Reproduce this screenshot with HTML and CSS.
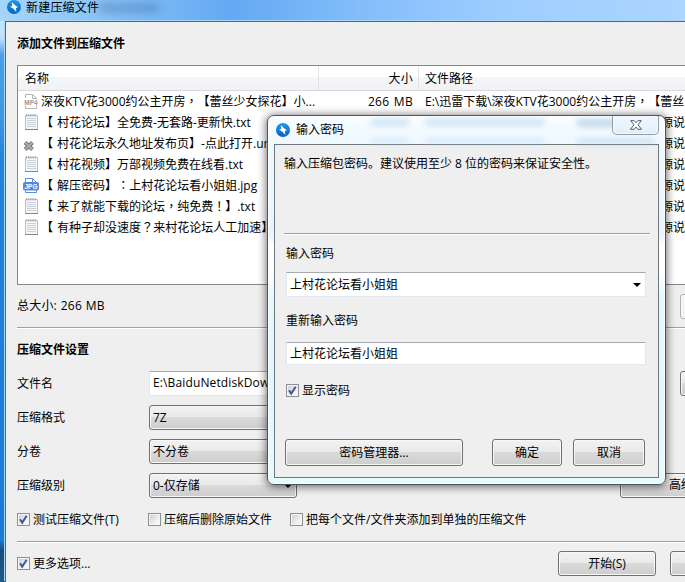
FILE: index.html
```html
<!DOCTYPE html>
<html lang="zh-CN">
<head>
<meta charset="utf-8">
<title>新建压缩文件</title>
<link rel="stylesheet" href="styles.css">
</head>
<body>
<svg class="defs" width="0" height="0">
  <defs>
    <linearGradient id="ball" x1="0" y1="0" x2="0" y2="1"><stop offset="0" stop-color="#1d96ea"/><stop offset="1" stop-color="#0765bd"/></linearGradient>
    <symbol id="app" viewBox="0 0 14 14"><circle cx="7" cy="7" r="7" fill="url(#ball)"/><path d="M4.800 2 8 5.200 11 7.300 8.900 8 9.400 12 6.200 8.600 3 6.700 5.300 6z" fill="#fff"/></symbol>
    <symbol id="txt" viewBox="0 0 14 17"><path d="M1.500 1.500h12v14h-12z" fill="#f4f6f7" stroke="#b9c0c3"/><path d="M2.500 0v2.500M4.700 0v2.500M6.900 0v2.500M9.100 0v2.500M11.300 0v2.500" stroke="#a6abae"/><path d="M3 4.500h9M3 6.500h9M3 8.500h9M3 10.500h9M3 12.500h9" stroke="#c6d3da"/><path d="M1 15.500h13" stroke="#7e8789"/></symbol>
    <symbol id="tick" viewBox="0 0 13 13"><path d="M3 6.300 5.200 9.600 9.700 2.800" fill="none" stroke="#41579c" stroke-width="2"/></symbol>
  </defs>
</svg>
<div class="titlebar"><svg class="app"><use href="#app"/></svg><span>新建压缩文件</span><i class="ghost"></i></div>
<main class="window">
  <h2 class="head">添加文件到压缩文件</h2>
  <section class="list">
    <div class="row cols"><span class="name">名称</span><span class="size">大小</span><span class="path">文件路径</span></div>
    <div class="row"><svg class="icon" viewBox="0 0 16 17"><path d="M2.500 5V1.500h7l4 4V6M9.500 1.500v4h4M2.500 12.500v3h11v-3" fill="none" stroke="#b4b4b4"/><text x="8" y="11.500" class="tag mp4">MP4</text></svg><span class="name">深夜KTV花3000约公主开房<b lang="zh-TW">，</b>【蕾丝少女探花】小...</span><span class="size">266 MB</span><span class="path">E:\迅雷下载\深夜KTV花3000约公主开房<b lang="zh-TW">，</b>【蕾丝</span></div>
    <div class="row"><svg class="icon page"><use href="#txt"/></svg><span class="name">【 村花论坛】全免费-无套路-更新快.txt</span><span class="tail">源说</span></div>
    <div class="row"><svg class="icon cross" viewBox="0 0 12 12"><path d="M2 2.500 9.500 9.500M9.500 2.500 2 9.500" stroke="#777" stroke-width="4"/><path d="M2 2.500 9.500 9.500M9.500 2.500 2 9.500" stroke="#aaa" stroke-width="2"/></svg><span class="name">【 村花论坛永久地址发布页】-点此打开.url</span><span class="tail">源说</span></div>
    <div class="row"><svg class="icon page"><use href="#txt"/></svg><span class="name">【 村花视频】万部视频免费在线看.txt</span><span class="tail">源说</span></div>
    <div class="row"><svg class="icon" viewBox="0 0 16 17"><path d="M2.500 6V1.500h7l4 4V15.500h-11z" fill="#fff" stroke="#5b8cdd"/><path d="M9.500 1.500v4h4" fill="none" stroke="#5b8cdd"/><rect y="5" width="16" height="8.500" rx="2" fill="#5388dc"/><text x="8" y="11.800" class="tag jpg">JPG</text></svg><span class="name">【 解压密码】<b lang="zh-TW">：</b>上村花论坛看小姐姐.jpg</span><span class="tail">源说</span></div>
    <div class="row"><svg class="icon page"><use href="#txt"/></svg><span class="name">【 来了就能下载的论坛<b lang="zh-TW">，</b>纯免费<b lang="zh-TW">！</b>】.txt</span><span class="tail">源说</span></div>
    <div class="row"><svg class="icon page"><use href="#txt"/></svg><span class="name">【 有种子却没速度<b lang="zh-TW">？</b>来村花论坛人工加速】</span><span class="tail">源说</span></div>
  </section>
  <div class="total"><span>总大小: 266 MB</span><button class="btn off sliver"></button></div>
  <hr>
  <h2 class="head settings">压缩文件设置</h2>
  <div class="field"><label>文件名</label><div class="input file">E:\BaiduNetdiskDownload</div><button class="btn sliver"></button></div>
  <div class="field"><label>压缩格式</label><div class="btn combo">7Z</div></div>
  <div class="field"><label>分卷</label><div class="btn combo">不分卷</div></div>
  <div class="field"><label>压缩级别</label><div class="btn combo">0-仅存储<i class="arrow"></i></div><button class="btn adv">高级</button></div>
  <div class="checks">
    <label class="c1"><span class="box"><svg><use href="#tick"/></svg></span>测试压缩文件(T)</label>
    <label class="c2"><span class="box"></span>压缩后删除原始文件</label>
    <label><span class="box"></span>把每个文件/文件夹添加到单独的压缩文件</label>
  </div>
  <hr class="low">
  <footer class="bottom"><label><span class="box"><svg><use href="#tick"/></svg></span>更多选项...</label><button class="btn start">开始(S)</button><button class="btn end"></button></footer>
</main>
<section class="dialog">
  <header class="dtitle"><svg class="app"><use href="#app"/></svg><span>输入密码</span><i class="smudges"></i>
    <button class="close"><svg viewBox="0 0 12 10"><path d="M.7.700h3.500L6 2.700 7.800.700h3.500L8 4.800l3.500 4.500H7.900L6 7 4.100 9.300H.500L4 4.800z" fill="#fff" stroke="#565b69"/></svg></button>
  </header>
  <div class="dbody">
    <p class="hint">输入压缩包密码。建议使用至少 8 位的密码来保证安全性。</p>
    <hr>
    <label class="l1">输入密码</label>
    <div class="input pw1">上村花论坛看小姐姐<i class="arrow"></i></div>
    <label class="l2">重新输入密码</label>
    <div class="input pw2">上村花论坛看小姐姐</div>
    <label class="show"><span class="box"><svg><use href="#tick"/></svg></span>显示密码</label>
    <div class="actions"><button class="btn mgr">密码管理器...</button><button class="btn ok">确定</button><button class="btn cancel">取消</button></div>
  </div>
</section>
</body>
</html>
```
FILE: styles.css
```css
* { box-sizing: border-box; }
html { overflow: hidden; }
body {
  margin: 0; width: 685px; height: 582px; overflow: hidden; position: relative;
  font: 12px/16px "Open Sans", "Noto Sans CJK SC", sans-serif; color: #000;
  text-spacing-trim: space-all; white-space: nowrap;
  background: linear-gradient(#9bd0fb 0, #c8e5fb 22px, #bfe0fa 38px, #4c9ee8 55px, #3c96e4 120px, #2383d8 160px, #1c7ad2 540px, #174f7c 550px, #215a83 582px);
}
/* full-width punctuation centred in its cell */
b { font-weight: 400; font-family: "Noto Sans CJK TC", sans-serif; line-height: 1; }
.defs { position: absolute; }
h2, p { margin: 0; font-size: 12px; }
button { font: inherit; color: inherit; padding: 0; }
.titlebar { height: 21px; display: flex; align-items: flex-start; padding-left: 7px; background: linear-gradient(90deg, #a5d5fa 0, #80bdf6 130px, #63a9f3 230px, #83bdfa 360px, #9dcdff 500px, #acd5ff 685px); }
.titlebar .app { margin-right: 5px; }
.app { width: 14px; height: 14px; flex: none; }
.titlebar span { margin-top: -1px; line-height: 17px; letter-spacing: .2px; }
.ghost { width: 60px; height: 10px; margin-top: 3px; background: #426fa5; opacity: .4; filter: blur(4px); }
.window { margin-left: 5px; width: 680px; height: 561px; overflow: hidden; border: solid #496783; border-width: 1px 0 0 1px; box-shadow: -1px -1px 0 #a8d8f8; background: #efefef; padding-left: 11px; }
.head { height: 43px; line-height: 44px; font-weight: 700; }
.list { height: 220px; border: 1px solid #828790; border-right: 0; background: #fff; }
.row { height: 21px; display: flex; align-items: center; }
.row .icon { width: 16px; height: 17px; flex: none; margin: 0 2px 0 5px; }
.row .page { width: 14px; margin: 0 3px 0 6px; }
.row .cross { width: 12px; height: 12px; margin: 4px 6px 0 5px; }
.name { width: 278px; flex: none; padding-top: 1px; word-spacing: 1px; }
.size { width: 94px; text-align: right; word-spacing: 1px; letter-spacing: .3px; flex: none; padding-top: 1px; }
.path { margin-left: 12px; padding-top: 1px; }
.tail { margin-left: 342px; width: 24px; flex: none; padding-top: 1px; }
.cols { height: 25px; background: linear-gradient(#fff 0 45%, #f5f6f8 46%, #f1f2f4); border-bottom: 1px solid #d8dadd; }
.cols .name { width: 301px; padding-left: 7px; height: 24px; line-height: 24px; border-right: 1px solid #e1e3e6; }
.cols .size { width: 100px; padding-right: 5px; height: 24px; line-height: 24px; border-right: 1px solid #e1e3e6; }
.cols .path { margin-left: 6px; }
.tag { font: bold 6.5px "Liberation Sans", sans-serif; text-anchor: middle; }
.mp4 { fill: #999; }
.jpg { fill: #fff; }
.total { height: 42px; display: flex; align-items: center; justify-content: space-between; word-spacing: .5px; letter-spacing: .2px; }
hr { border: 0; height: 2px; margin: 0; background: linear-gradient(#a0a0a0 50%, #fff 50%); }
.settings { height: 37px; line-height: 42px; }
.field { height: 34px; display: flex; align-items: center; }
.field > label { width: 132px; flex: none; padding-top: 2px; }
.btn { display: flex; align-items: center; justify-content: center; border: 1px solid #707070; border-radius: 3px; box-shadow: inset 0 0 0 1px #f8f8f8; background: linear-gradient(#f2f2f2, #e9e9e9 48%, #dadada 50%, #cdcdcd); height: 25px; flex: none; }
.off { border-color: #adb2b5; background: #f4f4f4; }
.sliver { width: 20px; margin-right: -15px; }
.field .sliver { margin-left: 31px; }
.input { border: 1px solid #e2e6ed; border-top-color: #a6a9b1; border-radius: 1px; background: #fff; height: 25px; display: flex; align-items: center; padding-left: 3px; }
.file { width: 500px; flex: none; letter-spacing: .13px; }
.combo { width: 148px; justify-content: flex-start; padding: 1px 4px 0 3px; }
.arrow { border: 4px solid transparent; border-top-color: #000; border-bottom: 0; margin-left: auto; }
.adv { width: 130px; margin-left: 323px; padding-left: 48px; justify-content: flex-start; }
.checks { height: 34px; display: flex; align-items: center; padding-top: 1px; }
.checks label, .bottom label, .show { display: flex; align-items: center; }
.c1 { width: 131px; }
.c2 { width: 142px; }
.box { width: 13px; height: 13px; border: 1px solid #8e8f8f; background: linear-gradient(135deg, #c9ced3, #f5f5f5 75%); box-shadow: inset 0 0 0 1px #f4f4f4; margin-right: 3px; flex: none; }
.box svg { display: block; width: 13px; height: 13px; margin: -1px; }
.low { margin-top: 5px; }
.bottom { height: 41px; display: flex; align-items: center; }
.bottom label { width: 541px; flex: none; }
.start { width: 98px; margin-right: 14px; }
.end { width: 50px; }
.dialog {
  position: absolute; left: 267px; top: 115px; width: 399px; height: 370px; padding: 0 6px 7px 6px;
  border: 1px solid #4d5357; border-radius: 7px; box-shadow: inset 0 0 0 1px #fff, 0 1px 8px 1px rgba(0,0,0,.55);
  background: linear-gradient(#f8fdff 0, #eef8ff 30px, #e9f4ff 120px, #fff 130px 155px, #e1faff 180px, #def8ff 75%, #e2fcff);
}
.dtitle { height: 28px; display: flex; align-items: center; padding-left: 2px; position: relative; }
.dtitle .app { margin-right: 6px; }
.smudges { position: absolute; left: 95px; top: 3px; width: 285px; height: 24px; filter: blur(3px); opacity: .5; background: linear-gradient(#a7cdec, #a7cdec) 2px 0/38px 7px no-repeat, linear-gradient(#a7cdec, #a7cdec) 56px 0/120px 7px no-repeat, linear-gradient(#8cb4d8, #8cb4d8) 208px 0/77px 8px no-repeat, linear-gradient(#a7cdec, #a7cdec) 2px 20px/38px 6px no-repeat, linear-gradient(#a7cdec, #a7cdec) 56px 20px/120px 6px no-repeat, linear-gradient(#8cb4d8, #8cb4d8) 208px 20px/77px 6px no-repeat; }
.close { position: absolute; right: 0; top: 0; width: 47px; height: 19px; border: 1px solid #949ba3; border-top: 0; border-radius: 0 0 5px 5px; background: linear-gradient(#eff8ff, #e0edf8); box-shadow: inset 0 0 0 1px #f4faff; display: flex; align-items: center; justify-content: center; }
.close svg { width: 12px; height: 10px; }
.dbody { height: 334px; border: 1px solid #70777b; background: #efefef; padding: 0 9px 0 11px; }
.hint { height: 88px; padding-top: 11px; margin-left: -2px; font-weight: 400; }
.dbody hr { margin-left: -2px; margin-right: -1px; }
.l1, .l2 { display: flex; align-items: center; }
.l1 { height: 37px; }
.pw1 { width: 360px; padding-right: 4px; }
.l2 { height: 45px; padding-top: 2px; }
.pw2 { width: 360px; height: 23px; }
.show { height: 50px; padding-top: 1px; }
.actions { display: flex; margin: 24px 0 0 -1px; }
.actions .btn { height: 27px; }
.mgr { width: 178px; margin-right: 29px; }
.ok { width: 70px; margin-right: 11px; }
.cancel { width: 72px; }
```
